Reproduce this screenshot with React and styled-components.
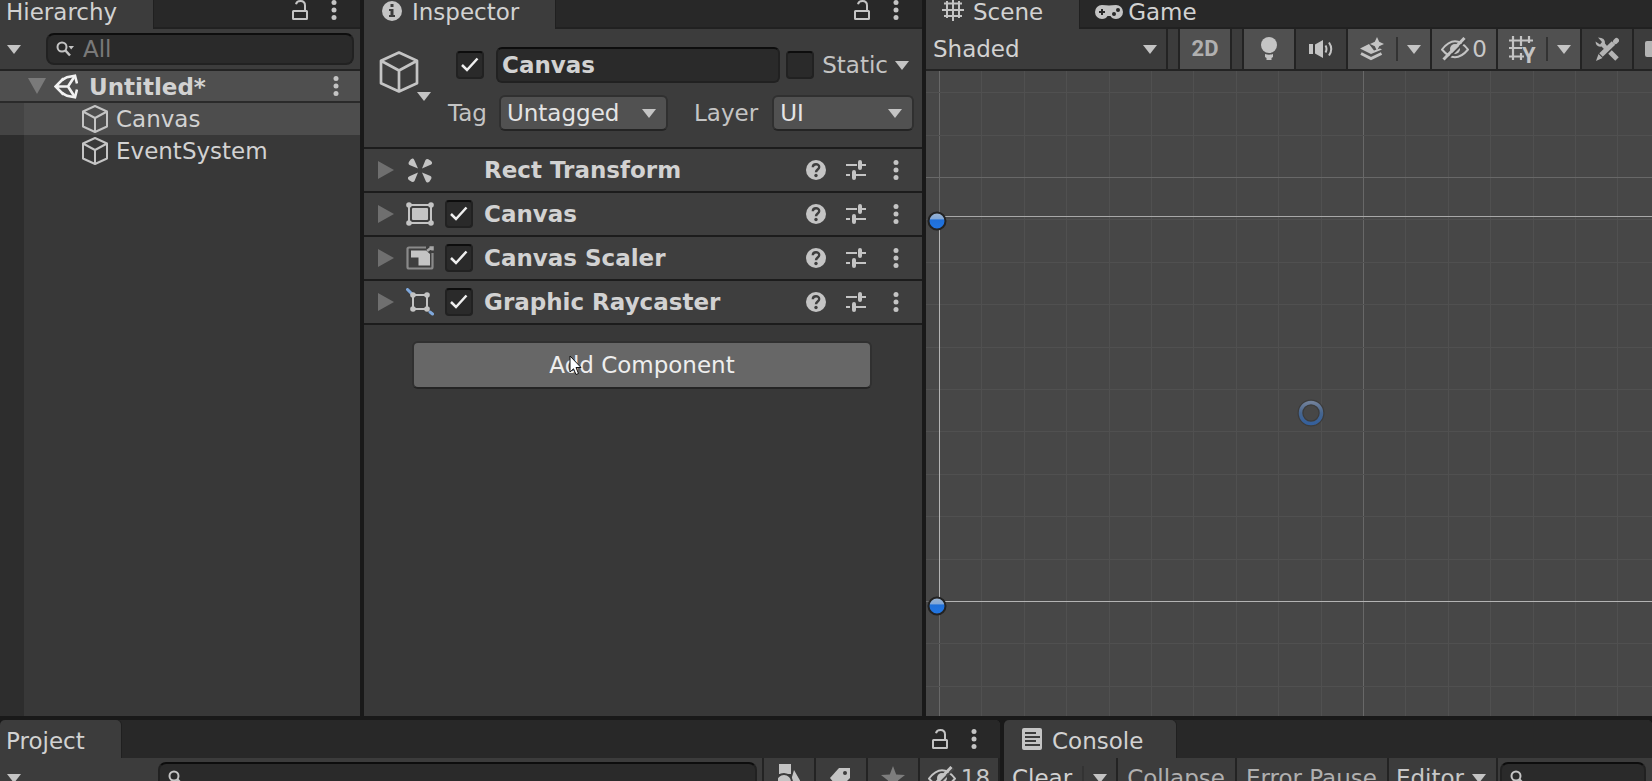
import React from "react";
import styled, { createGlobalStyle, css } from "styled-components";

const GlobalStyle = createGlobalStyle`
  *, *::before, *::after { box-sizing: border-box; }
  body {
    margin: 0;
    background: #191919;
    color: #d2d2d2;
    font: 23px/24px "DejaVu Sans", Verdana, sans-serif;
  }
  button, input, select { font: inherit; color: inherit; margin: 0; }
  select { line-height: 28px; }
  svg { display: block; flex: none; }
`;

/* ---------- icons ---------- */

const Dots = () => (
  <svg width="6" height="20" fill="#c4c4c4">
    <circle cx="3" cy="2.5" r="2.5" />
    <circle cx="3" cy="10" r="2.5" />
    <circle cx="3" cy="17.5" r="2.5" />
  </svg>
);
const Lock = () => (
  <svg width="16" height="20" fill="none" stroke="#c4c4c4" strokeWidth="2">
    <rect x="1" y="11" width="14" height="8" rx="0.5" />
    <path d="M4 4.2C4.5 1.8 6.3 1 8.5 1c3 0 4.5 1.800 4.500 4.500V11" />
  </svg>
);
const Triangle = ({ color = "#c4c4c4" }) => (
  <svg width="14" height="9" fill={color}>
    <path d="M0 0H14L7 9Z" />
  </svg>
);
const FoldOpen = () => (
  <svg width="18" height="16" fill="#7a7a7a">
    <path d="M0 0H18L9 16Z" />
  </svg>
);
const FoldClosed = () => (
  <svg width="16" height="18" fill="#6f6f6f">
    <path d="M0 0L16 9L0 18Z" />
  </svg>
);
const Cube = ({ width = 26, height = 28 }) => (
  <svg width={width} height={height} viewBox="0 0 26 28" fill="none" stroke="#c4c4c4" strokeWidth={width > 30 ? 1.8 : 2} strokeLinejoin="round">
    <path d="M13 1L25 6.500V21.500L13 27L1 21.500V6.500ZM1 6.500L13 13L25 6.500M13 13V27" />
  </svg>
);
const UnityLogo = () => (
  <svg width="24" height="25" fill="none" stroke="#f2f2f2" strokeWidth="2.600">
    <path d="M9.500 4.500L1.500 12.500L9.500 20.500M1.500 12.500H14L20.500 2.500M14 12.500L20.500 22.500" />
    <path d="M8 6L13 3.200L21 1.700L23 9.500M8 19L13 21.800L21 23.300L23 15.500" />
  </svg>
);
const SearchIcon = ({ menu }) => (
  <svg width="18" height="16" fill="none" stroke="#c4c4c4" strokeWidth="2">
    <circle cx="6" cy="6" r="4.500" />
    <path d="M9 9L14 14.500" strokeWidth="2.500" />
    {menu && <path d="M12.500 5H18L15.200 8.500Z" fill="#c4c4c4" stroke="none" />}
  </svg>
);
const Info = () => (
  <svg width="20" height="22" viewBox="0 -2 20 22">
    <circle cx="10" cy="10" r="10" fill="#c4c4c4" />
    <path d="M8.500 3H11.500V6H8.500ZM7 8H11.500V14H13V16H7V14H8.500V10H7Z" fill="#3c3c3c" />
  </svg>
);
const Hash = () => (
  <svg width="22" height="22" stroke="#c4c4c4" strokeWidth="2">
    <path d="M5 2V19M11 0V22M17 2V19M2 4.500H20M0 11H22M2 17H20" />
  </svg>
);
const Gamepad = () => (
  <svg width="28" height="20" viewBox="0 -4 28 20">
    <path d="M7 1Q11 1 14 1.500Q17 1 21 1A7 7 0 0 1 21 15Q17 15 15.500 12H12.500Q11 15 7 15A7 7 0 0 1 7 1Z" fill="#c4c4c4" />
    <path d="M7 5V11M4 8H10" stroke="#282828" strokeWidth="2" />
    <circle cx="23" cy="6" r="2" fill="#282828" />
    <circle cx="19" cy="10" r="2" fill="#282828" />
  </svg>
);
const Check = () => (
  <svg width="18" height="16" fill="none" stroke="#efefef" strokeWidth="2.500">
    <path d="M1 8L6 13L16.500 1.500" />
  </svg>
);
const Help = () => (
  <svg width="20" height="20">
    <circle cx="10" cy="10" r="10" fill="#c4c4c4" />
    <path d="M6.800 7.200C6.800 3.300 13.200 3.200 13.200 7C13.200 9.500 10 9.500 10 12.300" fill="none" stroke="#3e3e3e" strokeWidth="2.400" />
    <circle cx="10" cy="15.500" r="1.700" fill="#3e3e3e" />
  </svg>
);
const Sliders = () => (
  <svg width="20" height="20" stroke="#c4c4c4" strokeWidth="2">
    <path d="M0 5H11M14 5H20M0 15H4M8 15H20" />
    <path d="M14 2V8M8 12V18" strokeWidth="4" strokeLinecap="round" />
  </svg>
);
const RectTransformIcon = () => (
  <svg width="28" height="25" fill="#c4c4c4">
    {[0, 90, 180, 270].map((a) => (
      <path key={a} transform={`rotate(${a} 14 12.500)`} d="M12 10.500L3.500 7Q1.500 5.500 3.500 3Q5 0 7 0.500Q8 1 8.500 2.500Z" />
    ))}
  </svg>
);
const CanvasIcon = () => (
  <svg width="28" height="24" fill="#c4c4c4">
    <rect x="3" y="3" width="22" height="18" fill="none" stroke="#c4c4c4" strokeWidth="2" />
    <rect x="6" y="6" width="16" height="12" rx="1" />
    {[3, 25].map((x) => [3, 21].map((y) => <circle key={`${x}-${y}`} cx={x} cy={y} r="2.800" />))}
  </svg>
);
const CanvasScalerIcon = () => (
  <svg width="28" height="24">
    <path d="M20 1.500H3Q1.500 1.500 1.500 3V21Q1.500 22.500 3 22.500H25Q26.500 22.500 26.500 21V7" fill="none" stroke="#8a8a8a" strokeWidth="2.200" />
    <path d="M5 4.500H20L24 8V19.500H12.500V11.500H5Z" fill="#c4c4c4" />
    <path d="M21 5L25.500 1.500M23.500 1.500H26.500V4.500" stroke="#a8a8a8" strokeWidth="2.500" fill="none" />
  </svg>
);
const RaycasterIcon = () => (
  <svg width="28" height="28" fill="#c4c4c4">
    <path d="M1.500 1.500L6 6M24 24L26.500 26" stroke="#7fa8dc" strokeWidth="3" strokeLinecap="round" />
    <rect x="7" y="7" width="14" height="14" fill="none" stroke="#c4c4c4" strokeWidth="2" />
    {[7, 21].map((x) => [7, 21].map((y) => <circle key={`${x}-${y}`} cx={x} cy={y} r="2.800" />))}
  </svg>
);
const Bulb = () => (
  <svg width="16" height="24" fill="#c4c4c4">
    <circle cx="8" cy="8" r="8" />
    <path d="M4 17Q8 18.500 12 17V20L10.500 21V23H5.500V21L4 20Z" />
  </svg>
);
const Speaker = () => (
  <svg width="24" height="18" fill="#c4c4c4">
    <path d="M0 4H4V14H0ZM6 4.500L14 0V18L6 13.500Z" />
    <path d="M16.500 5.500Q18.500 9 16.500 12.500M20 2.500Q24.500 9 20 15.500" fill="none" stroke="#c4c4c4" strokeWidth="2" />
  </svg>
);
const Effects = () => (
  <svg width="24" height="24" fill="#c4c4c4">
    <path d="M0 11.500L9 7L14 13.500L20 11.500L22 12.500L11 17Z" />
    <path d="M17 0L19.200 4.800L24 7L19.200 9.200L17 14L14.800 9.200L10 7L14.800 4.800Z" />
    <path d="M1 16.500L11 21.500L21.500 16.500" fill="none" stroke="#c4c4c4" strokeWidth="3" />
  </svg>
);
const EyeOff = () => (
  <svg width="28" height="24" fill="none" stroke="#c4c4c4" strokeWidth="2">
    <path d="M1 12.500Q14 -4 27 12.500Q14 28 1 12.500Z" />
    <circle cx="14" cy="12" r="5" fill="#c4c4c4" stroke="none" />
    <path d="M5 23.500L26 2.500" stroke="#484848" strokeWidth="2" />
    <path d="M2.500 22.500L23.500 1" strokeWidth="3" />
  </svg>
);
const GridAxis = () => (
  <svg width="28" height="32" stroke="#c4c4c4" strokeWidth="2.200">
    <path d="M5 3V27M13 3V13M21 3V10M13 20V27M1 7.500H25M1 15H14M1 23.500H16" fill="none" />
    <text x="14" y="30" fill="#c4c4c4" stroke="none" fontFamily="Roboto, sans-serif" fontWeight="700" fontSize="22">Y</text>
  </svg>
);
const Tools = () => (
  <svg width="24" height="24" fill="none" stroke="#b4b4b4">
    <path d="M3 0.500L7 5L5 7.500L0.500 4.500Q1 10.500 6.500 9.500L9.500 12.500L12.500 9.500L10 6.500Q10.500 0.500 3 0.500Z" fill="#b4b4b4" stroke="none" />
    <path d="M15 15L22 22" strokeWidth="5" strokeLinecap="butt" />
    <path d="M6 18L18.500 6" strokeWidth="5" />
    <path d="M20.500 4.500L21.500 3.500" strokeWidth="5" strokeLinecap="round" />
    <path d="M3.500 17L7.500 21L1 24Z" fill="#b4b4b4" stroke="none" />
  </svg>
);
const Camera = () => (
  <svg width="28" height="16" fill="#b4b4b4">
    <rect width="18" height="16" rx="2" />
    <path d="M20 6L28 1V15L20 10Z" />
  </svg>
);
const Shapes = () => (
  <svg width="22" height="28" fill="#c4c4c4">
    <path d="M1 0H13V10H1ZM16 6L24 20H12Z" />
    <circle cx="6" cy="18" r="8" stroke="#3c3c3c" strokeWidth="2" />
  </svg>
);
const TagIcon = () => (
  <svg width="22" height="24">
    <path d="M9 2H20V12L9 23L0 12Z" fill="#c4c4c4" />
    <circle cx="15" cy="7" r="2" fill="#3c3c3c" />
  </svg>
);
const Star = () => (
  <svg width="24" height="24" fill="#7d7d7d">
    <path d="M12 0L15.200 8.500L24 9L17 14.500L19.500 23L12 18L4.500 23L7 14.500L0 9L8.800 8.500Z" />
  </svg>
);
const ConsoleIcon = () => (
  <svg width="20" height="22">
    <rect width="20" height="22" rx="2" fill="#c4c4c4" />
    <path d="M3 5H14M3 9H18M3 13H14M3 17H18" stroke="#3c3c3c" strokeWidth="2" />
  </svg>
);

/* ---------- shell ---------- */

const Editor = styled.div`
  display: flex;
  flex-direction: column;
  gap: 4px;
  height: 100vh;
  overflow: hidden;
`;
const UpperDock = styled.div`
  flex: 1;
  min-height: 0;
  display: grid;
  grid-template-columns: 360fr 558fr 726fr;
  gap: 4px;
`;
const LowerDock = styled.div`
  flex: 0 0 61px;
  overflow: hidden;
  display: grid;
  grid-template-columns: 1000fr 648fr;
  gap: 4px;
`;
const Panel = styled.section`
  min-width: 0;
  display: flex;
  flex-direction: column;
  overflow: hidden;
  background: #383838;
  border-radius: ${(p) => (p.$rounded ? "5px 5px 0 0" : 0)};
`;
const TabStrip = styled.div`
  flex: none;
  display: flex;
  align-items: flex-end;
  height: ${(p) => (p.$cut ? 29 : 38)}px;
  overflow: hidden;
  background: #282828;
  box-shadow: ${(p) => (p.$cut ? "inset 0 -2px #212121" : "none")};
`;
const TabButton = styled.button`
  flex: none;
  display: flex;
  align-items: center;
  gap: ${(p) => p.$gap ?? 10}px;
  height: 38px;
  padding: 0 ${(p) => p.$end ?? 36}px 0 ${(p) => p.$inset ?? 6}px;
  border: 0;
  border-radius: 5px 5px 0 0;
  background: ${(p) => (p.$active ? "#3c3c3c" : "transparent")};
  box-shadow: ${(p) => (p.$active ? "1px 0 #202020" : "none")};
`;
const TabText = styled.span`
  padding-top: 4px;
`;
const StripActions = styled.div`
  display: flex;
  align-items: center;
  gap: 23px;
  height: 38px;
  margin-left: auto;
  padding-right: 23px;
`;
const IconButton = styled.button`
  display: flex;
  flex: none;
  padding: 0;
  border: 0;
  background: none;
`;
const Toolbar = styled.div`
  flex: none;
  display: flex;
  align-items: stretch;
  height: 42px;
  background: #3c3c3c;
  border-bottom: 2px solid #232323;
  overflow: hidden;
`;
const field = css`
  background: #2a2a2a;
  border: 2px solid #212121;
  border-top-color: #0d0d0d;
`;
const SearchBox = styled.label`
  ${field}
  flex: 1;
  min-width: 0;
  display: flex;
  align-items: center;
  gap: 9px;
  height: 32px;
  margin: 4px 6px 4px ${(p) => p.$left}px;
  padding-left: 8px;
  border-radius: 8px;
`;
const SearchInput = styled.input`
  flex: 1;
  min-width: 0;
  height: 24px;
  padding: 0;
  border: 0;
  outline: 0;
  background: none;
  &::placeholder { color: #797979; opacity: 1; }
`;
const MenuButton = styled(IconButton)`
  align-items: center;
  padding-left: 7px;
`;

const Actions = () => (
  <StripActions>
    <IconButton aria-label="Lock panel"><Lock /></IconButton>
    <IconButton aria-label="Panel menu"><Dots /></IconButton>
  </StripActions>
);
const Tab = ({ icon, children, ...rest }) => (
  <TabButton role="tab" {...rest}>
    {icon}
    <TabText>{children}</TabText>
  </TabButton>
);

/* ---------- hierarchy ---------- */

const Tree = styled.div`
  flex: 1;
  background: linear-gradient(to right, #2d2d2d 24px, #383838 24px);
`;
const SceneRow = styled.div`
  display: flex;
  align-items: center;
  height: 32px;
  padding: 0 21px 0 28px;
  background: #4f4f4f;
  border-bottom: 2px solid #2a2a2a;
  font-weight: 700;
`;
const SceneName = styled.span`
  flex: 1;
  padding: 2px 0 0 11px;
`;
const SceneLogo = styled.span`
  margin-left: 8px;
`;
const ObjectRow = styled.div`
  display: flex;
  align-items: center;
  gap: 8px;
  height: 32px;
  padding-left: 82px;
  background: ${(p) => (p.$selected ? "linear-gradient(to right, #444 24px, #4d4d4d 24px)" : "none")};
`;

function Hierarchy() {
  return (
    <Panel>
      <TabStrip $cut>
        <Tab $active>Hierarchy</Tab>
        <Actions />
      </TabStrip>
      <Toolbar>
        <MenuButton aria-label="Create"><Triangle /></MenuButton>
        <SearchBox $left={25}>
          <SearchIcon menu />
          <SearchInput placeholder="All" aria-label="Search hierarchy" />
        </SearchBox>
      </Toolbar>
      <Tree>
        <SceneRow>
          <IconButton aria-label="Collapse scene"><FoldOpen /></IconButton>
          <SceneLogo><UnityLogo /></SceneLogo>
          <SceneName>Untitled*</SceneName>
          <IconButton aria-label="Scene menu"><Dots /></IconButton>
        </SceneRow>
        <ObjectRow $selected><Cube />Canvas</ObjectRow>
        <ObjectRow><Cube />EventSystem</ObjectRow>
      </Tree>
    </Panel>
  );
}

/* ---------- inspector ---------- */

const CheckWrap = styled.span`
  flex: none;
  display: grid;
  place-items: center;
  width: 28px;
  height: 28px;
  > * { grid-area: 1 / 1; }
  > svg { pointer-events: none; display: none; }
  > input:checked + svg { display: block; }
`;
const CheckInput = styled.input`
  ${field}
  appearance: none;
  width: 28px;
  height: 28px;
  border-radius: 4px;
`;
const CheckBox = (props) => (
  <CheckWrap>
    <CheckInput type="checkbox" {...props} />
    <Check />
  </CheckWrap>
);
const ObjectHeader = styled.header`
  display: flex;
  gap: 30px;
  padding: 18px 8px 16px 15px;
  background: #3c3c3c;
  border-bottom: 2px solid #1c1c1c;
`;
const ObjectIcon = styled.button`
  display: flex;
  flex: none;
  align-items: flex-end;
  align-self: flex-start;
  margin: 4px -13px 0 0;
  padding: 0 0 8px;
  border: 0;
  background: none;
  > svg + svg { margin: 0 0 -8px -2px; }
`;
const HeaderFields = styled.div`
  flex: 1;
  min-width: 0;
  display: flex;
  flex-direction: column;
  gap: 12px;
`;
const FieldRow = styled.div`
  display: flex;
  align-items: center;
`;
const NameInput = styled.input`
  ${field}
  flex: 1;
  min-width: 0;
  height: 36px;
  margin: 0 6px 0 12px;
  padding: 0 4px;
  border-radius: 6px;
  font-weight: 700;
`;
const FieldLabel = styled.label`
  flex: none;
  color: #c4c4c4;
  margin-left: ${(p) => p.$left ?? 0}px;
`;
const StaticMenu = styled(IconButton)`
  margin: 0 5px 0 7px;
`;
const SelectWrap = styled.div`
  flex: ${(p) => p.$grow ?? 1};
  min-width: 0;
  display: grid;
  align-items: center;
  margin-left: ${(p) => p.$left ?? 0}px;
  > * { grid-area: 1 / 1; }
  > svg { justify-self: end; margin-right: ${(p) => p.$right ?? 12}px; pointer-events: none; }
`;
const BoxSelect = styled.select`
  appearance: none;
  width: 100%;
  height: 36px;
  padding: 0 6px;
  border: 2px solid #303030;
  border-bottom-color: #242424;
  border-radius: 6px;
  background: #515151;
  color: #e4e4e4;
`;
const ComponentRow = styled.div`
  display: grid;
  grid-template-columns: 17px 28px 28px 1fr auto;
  align-items: center;
  height: 44px;
  padding: 0 23px 0 14px;
  background: #3e3e3e;
  border-bottom: 2px solid #1c1c1c;
  column-gap: 11px;
`;
const ComponentName = styled.h2`
  margin: 0;
  font: inherit;
  font-weight: 700;
`;
const RowActions = styled.div`
  display: flex;
  align-items: center;
  gap: 20px;
  > :last-child { margin-left: 7px; }
`;
const AddArea = styled.div`
  padding: 16px 50px 0 48px;
`;
const AddButton = styled.button`
  width: 100%;
  height: 48px;
  padding: 0;
  border: 2px solid #303030;
  border-bottom-color: #242424;
  border-radius: 6px;
  background: #676767;
  color: #eee;
`;
const Pointer = styled.svg`
  position: absolute;
  left: 569px;
  top: 355px;
  pointer-events: none;
`;

const components = [
  { name: "Rect Transform", Icon: RectTransformIcon },
  { name: "Canvas", Icon: CanvasIcon, toggle: true },
  { name: "Canvas Scaler", Icon: CanvasScalerIcon, toggle: true },
  { name: "Graphic Raycaster", Icon: RaycasterIcon, toggle: true },
];

function Inspector() {
  return (
    <Panel>
      <TabStrip $cut>
        <Tab $active $inset={18} icon={<Info />}>Inspector</Tab>
        <Actions />
      </TabStrip>
      <ObjectHeader>
        <ObjectIcon aria-label="Choose icon">
          <Cube width={40} height={42} />
          <Triangle />
        </ObjectIcon>
        <HeaderFields>
          <FieldRow>
            <FieldLabel $left={8} as="span"><CheckBox defaultChecked aria-label="Active" /></FieldLabel>
            <NameInput defaultValue="Canvas" aria-label="Name" />
            <CheckBox id="static" />
            <FieldLabel $left={8} htmlFor="static">Static</FieldLabel>
            <StaticMenu aria-label="Static flags"><Triangle /></StaticMenu>
          </FieldRow>
          <FieldRow>
            <FieldLabel htmlFor="tag">Tag</FieldLabel>
            <SelectWrap $left={12} $grow={168}>
              <BoxSelect id="tag"><option>Untagged</option></BoxSelect>
              <Triangle />
            </SelectWrap>
            <FieldLabel $left={26} htmlFor="layer">Layer</FieldLabel>
            <SelectWrap $left={14} $grow={141}>
              <BoxSelect id="layer"><option>UI</option></BoxSelect>
              <Triangle />
            </SelectWrap>
          </FieldRow>
        </HeaderFields>
      </ObjectHeader>
      {components.map(({ name, Icon, toggle }) => (
        <ComponentRow key={name}>
          <IconButton aria-label={`Expand ${name}`}><FoldClosed /></IconButton>
          <Icon />
          {toggle ? <CheckBox defaultChecked aria-label={`Enable ${name}`} /> : <span />}
          <ComponentName>{name}</ComponentName>
          <RowActions>
            <IconButton aria-label="Help"><Help /></IconButton>
            <IconButton aria-label="Presets"><Sliders /></IconButton>
            <IconButton aria-label="Component menu"><Dots /></IconButton>
          </RowActions>
        </ComponentRow>
      ))}
      <AddArea>
        <AddButton>Add Component</AddButton>
      </AddArea>
    </Panel>
  );
}

/* ---------- scene ---------- */

const ShadeSelect = styled.select`
  appearance: none;
  width: 100%;
  height: 40px;
  padding: 0 7px;
  border: 0;
  background: none;
`;
const ShadeWrap = styled(SelectWrap)`
  flex: 0 0 242px;
  border-right: 2px solid #232323;
`;
const ToolButton = styled.button`
  flex: none;
  display: flex;
  align-items: center;
  justify-content: center;
  gap: ${(p) => p.$gap ?? 0}px;
  width: ${(p) => p.$width ?? 52}px;
  padding: 0;
  border: 0;
  border-right: 2px solid #232323;
  background: ${(p) => (p.$on ? "#505050" : "#3c3c3c")};
  color: ${(p) => (p.$dim ? "#b0b0b0" : "#c8c8c8")};
`;
const Spacer = styled.span`
  flex: 0 0 12px;
  border-right: 2px solid #232323;
`;
const SplitMain = styled(ToolButton)`
  width: 48px;
  border: 0;
`;
const SplitMenu = styled(ToolButton)`
  width: 36px;
  justify-content: flex-start;
  &::before {
    content: "";
    width: 2px;
    height: 24px;
    margin-right: 9px;
    background: #333;
  }
`;
const ModeText = styled.span`
  font: 700 22px/24px Roboto, sans-serif;
`;
const Viewport = styled.svg`
  flex: 1;
  width: 100%;
  min-height: 0;
  background: #474747;
`;

const STEP = 42.4;
function SceneView() {
  const xs = Array.from({ length: 80 }, (_, i) => i);
  const ys = Array.from({ length: 60 }, (_, i) => i - 2);
  const ordered = (list) => [...list].sort((a, b) => (a % 10 === 0) - (b % 10 === 0));
  const tone = (i) => (i % 10 === 0 ? "#686868" : "#505050");
  return (
    <Viewport>
      <defs>
        <linearGradient id="handle" x1="0" y1="0" x2="0" y2="1">
          <stop offset="0" stopColor="#9db4cf" />
          <stop offset="0.400" stopColor="#7fa6d8" />
          <stop offset="0.420" stopColor="#1f6fd8" />
          <stop offset="1" stopColor="#2276e3" />
        </linearGradient>
        <linearGradient id="ring" x1="0" y1="0" x2="0" y2="1">
          <stop offset="0" stopColor="#70809a" />
          <stop offset="0.500" stopColor="#46658e" />
          <stop offset="1" stopColor="#35609c" />
        </linearGradient>
      </defs>
      {ordered(xs).map((i) => (
        <rect key={`x${i}`} x={Math.round(13 + STEP * i)} y="0" width="1" height="100%" fill={tone(i)} />
      ))}
      {ordered(ys).map((i) => (
        <rect key={`y${i}`} x="0" y={Math.round(106 + STEP * i)} width="100%" height="1" fill={tone(i)} />
      ))}
      <rect x="13" y="145" width="100%" height="1" fill="#a8a8a8" />
      <rect x="13" y="530" width="100%" height="1" fill="#b4b4b4" />
      <rect x="13" y="145" width="1" height="386" fill="#b4b4b4" />
      <circle cx="385" cy="342" r="10.500" fill="none" stroke="#3c3c3c" strokeWidth="6" />
      <circle cx="385" cy="342" r="10.500" fill="none" stroke="url(#ring)" strokeWidth="3.500" />
      <circle cx="11" cy="150" r="8.500" fill="url(#handle)" stroke="#222" strokeWidth="2" />
      <circle cx="11" cy="535" r="8.500" fill="url(#handle)" stroke="#222" strokeWidth="2" />
    </Viewport>
  );
}

function Scene() {
  return (
    <Panel>
      <TabStrip $cut>
        <Tab $active $inset={16} $gap={9} icon={<Hash />}>Scene</Tab>
        <Tab $inset={16} $gap={5} icon={<Gamepad />}>Game</Tab>
      </TabStrip>
      <Toolbar>
        <ShadeWrap $right={9}>
          <ShadeSelect aria-label="Draw mode"><option>Shaded</option></ShadeSelect>
          <Triangle />
        </ShadeWrap>
        <Spacer />
        <ToolButton $on $dim><ModeText>2D</ModeText></ToolButton>
        <Spacer />
        <ToolButton $on aria-label="Lighting"><Bulb /></ToolButton>
        <ToolButton aria-label="Audio"><Speaker /></ToolButton>
        <SplitMain $on aria-label="Effects"><Effects /></SplitMain>
        <SplitMenu $on aria-label="Effects menu"><Triangle /></SplitMenu>
        <ToolButton $on $width={66} $gap={3}><EyeOff />0</ToolButton>
        <SplitMain $on aria-label="Grid"><GridAxis /></SplitMain>
        <SplitMenu $on aria-label="Grid menu"><Triangle /></SplitMenu>
        <ToolButton aria-label="Tools"><Tools /></ToolButton>
        <ToolButton aria-label="Camera"><Camera /></ToolButton>
      </Toolbar>
      <SceneView />
    </Panel>
  );
}

/* ---------- lower dock ---------- */

const EdgeSpacer = styled.span`
  flex: 0 0 7px;
  border-right: 2px solid #232323;
`;
const ProjectSearch = styled(SearchBox)`
  margin-right: 0;
`;
const TextButton = styled(ToolButton)`
  width: auto;
  padding: 0 10px 0 ${(p) => p.$left ?? 9}px;
`;
const ClearButton = styled(TextButton)`
  border-right: 0;
  color: #d2d2d2;
`;

function Project() {
  return (
    <Panel $rounded>
      <TabStrip>
        <Tab $active>Project</Tab>
        <Actions />
      </TabStrip>
      <Toolbar>
        <MenuButton aria-label="Create asset"><Triangle /></MenuButton>
        <ProjectSearch $left={137}>
          <SearchIcon />
          <SearchInput aria-label="Search project" />
        </ProjectSearch>
        <EdgeSpacer />
        <ToolButton aria-label="Filter by type"><Shapes /></ToolButton>
        <ToolButton aria-label="Filter by label"><TagIcon /></ToolButton>
        <ToolButton aria-label="Favorites"><Star /></ToolButton>
        <ToolButton $width={80} $gap={5}><EyeOff />18</ToolButton>
      </Toolbar>
    </Panel>
  );
}

function Console() {
  return (
    <Panel $rounded>
      <TabStrip>
        <Tab $active $inset={18} $end={33} icon={<ConsoleIcon />}>Console</Tab>
      </TabStrip>
      <Toolbar>
        <ClearButton $left={8}>Clear</ClearButton>
        <SplitMenu aria-label="Clear options"><Triangle /></SplitMenu>
        <TextButton $dim>Collapse</TextButton>
        <TextButton $dim>Error Pause</TextButton>
        <TextButton $left={7} $gap={8}>Editor<Triangle /></TextButton>
        <SearchBox $left={2}>
          <SearchIcon />
          <SearchInput aria-label="Search console" />
        </SearchBox>
      </Toolbar>
    </Panel>
  );
}

export default function App() {
  return (
    <>
      <GlobalStyle />
      <Editor>
        <UpperDock>
          <Hierarchy />
          <Inspector />
          <Scene />
        </UpperDock>
        <LowerDock>
          <Project />
          <Console />
        </LowerDock>
      </Editor>
      <Pointer width="14" height="21">
        <path d="M1 1V17L4.500 13.800L7 19.500L9.500 18.500L7 12.500H12Z" fill="#fff" stroke="#111" strokeWidth="1" />
      </Pointer>
    </>
  );
}
